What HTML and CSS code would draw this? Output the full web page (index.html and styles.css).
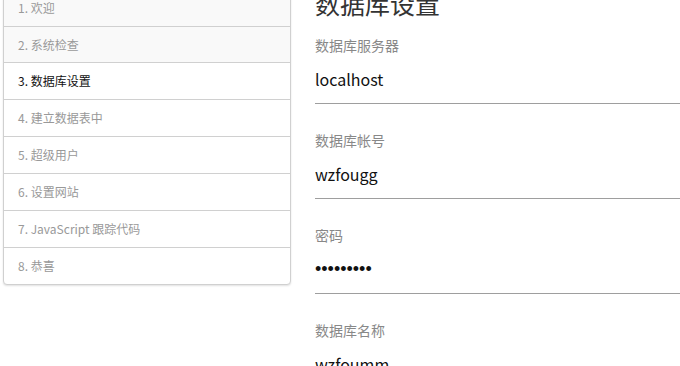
FILE: index.html
```html
<!DOCTYPE html>
<html lang="zh-CN">
<head>
    <meta charset="UTF-8">
    <title>安装 - 数据库设置</title>
    <link rel="stylesheet" href="styles.css">
</head>
<body>
<div class="wrap">
    <div class="side">
        <ul class="steps">
            <li class="done">1. 欢迎</li>
            <li class="done">2. 系统检查</li>
            <li class="cur">3. 数据库设置</li>
            <li>4. 建立数据表中</li>
            <li>5. 超级用户</li>
            <li>6. 设置网站</li>
            <li>7. JavaScript 跟踪代码</li>
            <li>8. 恭喜</li>
        </ul>
    </div>
    <div class="main">
        <h2>数据库设置</h2>
        <div class="field">
            <label>数据库服务器</label>
            <input type="text" value="localhost">
        </div>
        <div class="field">
            <label>数据库帐号</label>
            <input type="text" value="wzfougg">
        </div>
        <div class="field">
            <label>密码</label>
            <input type="password" class="pwd" value="123456789">
        </div>
        <div class="field">
            <label>数据库名称</label>
            <input type="text" value="wzfoumm">
        </div>
    </div>
</div>
</body>
</html>
```

FILE: styles.css
```css
body{margin:0;background:#fff;font-family:"Noto Sans CJK SC","Noto Sans",sans-serif;overflow:hidden;}
.wrap{display:flex;align-items:flex-start;}
.side{width:288px;padding-left:3px;flex-shrink:0;}
.steps{list-style:none;margin:-11px 0 0 0;padding:0;border:1px solid #d0d0d0;border-radius:0 0 4px 4px;box-shadow:0 1px 2px rgba(0,0,0,.12);background:#fff;}
.steps li{height:36px;line-height:36px;padding-left:14px;font-size:12px;color:#999;border-top:1px solid #d0d0d0;}
.steps li:first-child{border-top:none;}
.steps li:nth-child(2){height:35px;line-height:35px;}
.steps .done{background:#f9f9f9;}
.steps .cur{color:#111;}
.main{flex:1;margin-left:24px;margin-top:-10px;}
.main h2{margin:0;font-size:25px;font-weight:normal;line-height:26px;color:#333;}
.field{margin-top:20px;}
.field + .field{margin-top:27px;}
.field label{display:block;font-size:14px;line-height:18px;color:#888;}
.field input{display:block;box-sizing:border-box;width:100%;height:45px;margin-top:5px;padding:0 0 4px 0;border:none;border-bottom:1px solid #9e9e9e;outline:none;font-family:inherit;font-size:16px;color:#111;background:transparent;}
.field .pwd{font-family:"Liberation Sans",sans-serif;font-size:18px;}
```
